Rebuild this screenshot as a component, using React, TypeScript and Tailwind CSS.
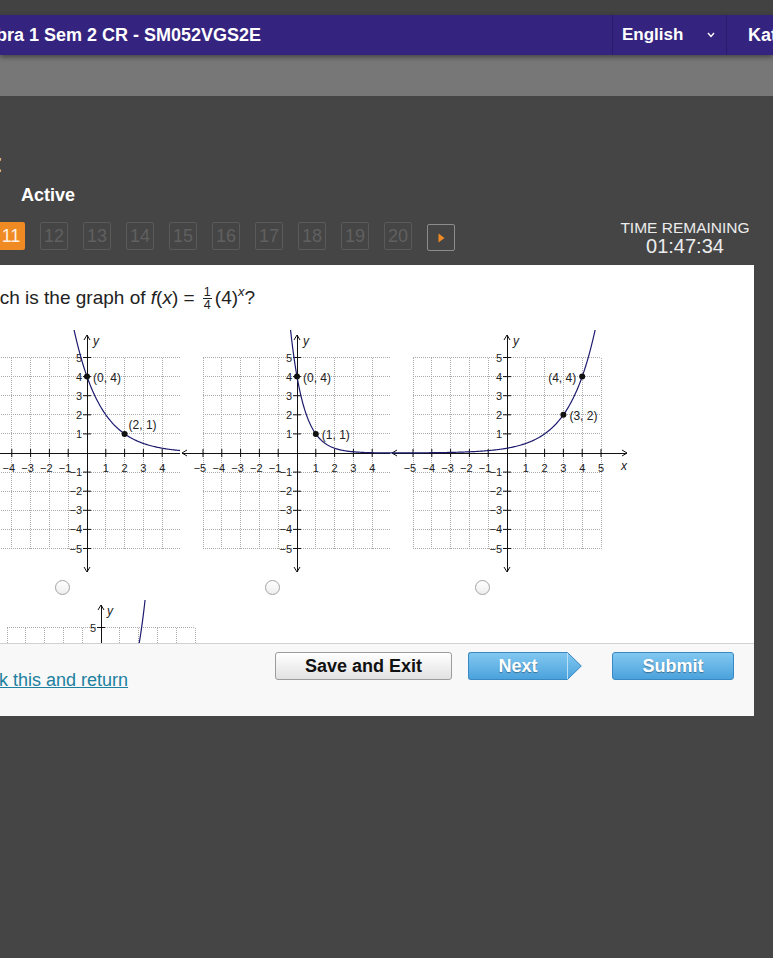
import React from 'react';

interface Pt {
  x: number;
  y: number;
  label: string;
  dx: number;
  dy: number;
  anchor?: 'start' | 'end';
}

// graph geometry (matches the 240x245 answer images)
const UX = 18.8;
const UY = 19.1;
const OX = 117;
const OY = 123;
const X = (v: number) => OX + v * UX;
const Y = (v: number) => OY - v * UY;
const TICKS = [-5, -4, -3, -2, -1, 1, 2, 3, 4, 5];
const GRID = [-5, -4, -3, -2, -1, 1, 2, 3, 4, 5];

const Graph: React.FC<{ f: (x: number) => number; pts: Pt[]; cut?: boolean }> = ({ f, pts, cut }) => {
  let d = '';
  for (let i = 0; i <= 270; i++) {
    const xv = -6.4 + i * 0.05;
    const sy = Y(f(xv));
    if (sy < -40) continue;
    d += (d ? 'L' : 'M') + X(xv).toFixed(2) + ' ' + sy.toFixed(2);
  }
  const xLabels = cut ? TICKS.filter((t) => t !== 5) : TICKS;

  return (
    <svg width="240" height="245" className="block" style={{ fontFamily: '"Liberation Sans", Arial, sans-serif' }}>
      <rect x="0" y="0" width="240" height="245" fill="#ffffff" />
      {GRID.map((g) => (
        <line
          key={'v' + g}
          x1={X(g)}
          x2={X(g)}
          y1={Y(5)}
          y2={Y(-5)}
          stroke="#ababab"
          strokeDasharray="1 1"
          shapeRendering="crispEdges"
        />
      ))}
      {GRID.map((g) => (
        <line
          key={'h' + g}
          x1={X(-5)}
          x2={X(5)}
          y1={Y(g)}
          y2={Y(g)}
          stroke="#ababab"
          strokeDasharray="1 1"
          shapeRendering="crispEdges"
        />
      ))}

      {/* axes */}
      <line x1="2" x2="237" y1={OY} y2={OY} stroke="#111" shapeRendering="crispEdges" />
      <line x1={OX} x2={OX} y1="5" y2="242" stroke="#111" shapeRendering="crispEdges" />
      <polyline points={`7,${OY - 3} 2,${OY} 7,${OY + 3}`} fill="none" stroke="#111" />
      <polyline points={`232,${OY - 3} 237,${OY} 232,${OY + 3}`} fill="none" stroke="#111" />
      <polyline points={`${OX - 3},10 ${OX},5 ${OX + 3},10`} fill="none" stroke="#111" />
      <polyline points={`${OX - 3},237 ${OX},242 ${OX + 3},237`} fill="none" stroke="#111" />

      {TICKS.map((t) => (
        <line key={'tx' + t} x1={X(t)} x2={X(t)} y1={OY - 4} y2={OY + 4} stroke="#111" />
      ))}
      {TICKS.map((t) => (
        <line key={'ty' + t} x1={OX - 4} x2={OX + 4} y1={Y(t)} y2={Y(t)} stroke="#111" />
      ))}

      {xLabels.map((t) => (
        <text
          key={'lx' + t}
          x={t < 0 ? X(t) + 3.2 : X(t)}
          y={142}
          fontSize="11"
          fill="#222"
          textAnchor={t < 0 ? 'end' : 'middle'}
        >
          {t < 0 ? '\u2212' + Math.abs(t) : t}
        </text>
      ))}
      {TICKS.map((t) => (
        <text key={'ly' + t} x={OX - 5} y={Y(t) + 4} fontSize="11" fill="#222" textAnchor="end">
          {t < 0 ? '\u2212' + Math.abs(t) : t}
        </text>
      ))}
      <text x={OX + 6} y="15" fontSize="12" fontStyle="italic" fill="#222">
        y
      </text>
      {!cut && (
        <text x={OX + 117} y="140" fontSize="12" fontStyle="italic" fill="#222" textAnchor="middle">
          x
        </text>
      )}

      <path d={d} fill="none" stroke="#1d1b6e" strokeWidth="1.2" />
      {pts.map((p) => (
        <g key={p.label}>
          <circle cx={X(p.x)} cy={Y(p.y)} r="3" fill="#111" />
          <text
            x={X(p.x) + p.dx}
            y={Y(p.y) + p.dy}
            fontSize="12"
            fill="#222"
            textAnchor={p.anchor === 'end' ? 'end' : 'start'}
          >
            {p.label}
          </text>
        </g>
      ))}
    </svg>
  );
};

const Radio: React.FC = () => (
  <div className="mt-[5px] ml-[85px] w-[15px] h-[15px] rounded-full border-[1.5px] border-[#a3a3a3] bg-linear-to-b from-white to-[#eeeeee]" />
);

const choices = [
  {
    f: (x: number) => 4 * Math.pow(0.5, x),
    pts: [
      { x: 0, y: 4, label: '(0, 4)', dx: 6, dy: 5 },
      { x: 2, y: 1, label: '(2, 1)', dx: 4, dy: -5 },
    ],
    cut: true,
  },
  {
    f: (x: number) => 4 * Math.pow(0.25, x),
    pts: [
      { x: 0, y: 4, label: '(0, 4)', dx: 6, dy: 5 },
      { x: 1, y: 1, label: '(1, 1)', dx: 6, dy: 5 },
    ],
    cut: true,
  },
  {
    f: (x: number) => Math.pow(2, x - 2),
    pts: [
      { x: 4, y: 4, label: '(4, 4)', dx: -6, dy: 5, anchor: 'end' as const },
      { x: 3, y: 2, label: '(3, 2)', dx: 6, dy: 5 },
    ],
    cut: false,
  },
];

const NavBtn: React.FC<{ n: number; active?: boolean }> = ({ n, active }) => (
  <div
    className={
      active
        ? 'w-[28px] h-[28px] rounded-[2px] bg-[#f08a22] text-[#fff1e2] text-[18px] flex items-center justify-center'
        : 'w-[28px] h-[28px] rounded-[2px] border border-[#5a5a5a] text-[#606060] text-[18px] flex items-center justify-center'
    }
  >
    {n}
  </div>
);

const App: React.FC = () => {
  return (
    <div className="w-[773px] h-[958px] overflow-hidden bg-[#454545] font-['Liberation_Sans',Arial,sans-serif]">
      <div className="h-[15px] bg-[#424242]" />

      {/* Top bar */}
      <header className="relative z-10 h-[40px] bg-[#35247f] shadow-[0_2px_5px_rgba(0,0,0,0.45)] flex text-white whitespace-nowrap">
        <div className="w-[612px] shrink-0 flex items-center">
          <span className="-ml-[43px] text-[18px] font-bold">Algebra 1 Sem 2 CR - SM052VGS2E</span>
        </div>
        <div className="w-[114px] shrink-0 border-l border-[#2a1c69] flex items-center pl-[9px]">
          <span className="text-[17px] font-bold">English</span>
          <svg width="8" height="6" viewBox="0 0 8 6" className="ml-[24px]">
            <polyline points="1,1 4,4.5 7,1" fill="none" stroke="#fff" strokeWidth="1.4" />
          </svg>
        </div>
        <div className="shrink-0 border-l border-[#2a1c69] flex items-center pl-[21px]">
          <span className="text-[18px] font-bold">Kathryn Smith</span>
        </div>
      </header>
      <div className="h-[41px] bg-[#777777]" />

      <main className="-ml-[60px] w-[814px]">
        {/* Status */}
        <div className="pt-[52px] h-[82px] flex">
          <div className="w-[63px] flex justify-end whitespace-nowrap text-[26px] leading-[30px] text-[#e5e5e5]">
            Unit Test:
          </div>
        </div>
        <div className="mt-[6px] pl-[81px] text-[18px] leading-[22px] font-bold text-white">Active</div>

        {/* Question navigation + timer */}
        <div className="mt-[14px] flex items-start justify-between">
          <div className="mt-[2px] pl-[57px] flex gap-[15px]">
            <NavBtn n={11} active />
            {[12, 13, 14, 15, 16, 17, 18, 19, 20].map((n) => (
              <NavBtn key={n} n={n} />
            ))}
            <div className="mt-[2px] w-[28px] h-[27px] rounded-[2px] border border-[#8c8c8c] flex items-center justify-center">
              <svg width="7" height="10" viewBox="0 0 7 10">
                <polygon points="0.5,0.5 6.5,5 0.5,9.5" fill="#f08a22" />
              </svg>
            </div>
          </div>
          <div className="mr-[2px] w-[134px] text-center text-[#ececec]">
            <div className="text-[15.5px] leading-none">TIME REMAINING</div>
            <div className="mt-[0.5px] text-[20px] leading-none">01:47:34</div>
          </div>
        </div>

        {/* Question panel */}
        <div className="mt-[9px] bg-white">
          <div className="h-[378px] overflow-hidden pt-[21px] pl-[27px]">
            <p className="h-[24px] text-[19px] leading-[24px] text-[#222] whitespace-nowrap">
              Which is the graph of <i>f</i>(<i>x</i>) ={' '}
              <span className="inline-flex flex-col items-center align-middle mx-[3px] text-[12.5px] leading-[12px]">
                <span className="px-[1px] border-b border-[#222]">1</span>
                <span>4</span>
              </span>
              (4)<span className="relative -top-[8px] text-[13px] italic">x</span>?
            </p>

            <div className="ml-[3px] mt-[20px]">
              <div className="flex">
                {choices.map((c, i) => (
                  <div key={i} className="relative w-[210px] shrink-0">
                    <Graph f={c.f} pts={c.pts} cut={c.cut} />
                    <Radio />
                  </div>
                ))}
              </div>
              <div className="mt-[5px] ml-[14px] flex">
                <div className="relative w-[210px] shrink-0">
                  <Graph
                    f={(x) => Math.pow(4, x - 1)}
                    pts={[
                      { x: 1, y: 1, label: '(1, 1)', dx: 6, dy: 5 },
                      { x: 2, y: 4, label: '(2, 4)', dx: 6, dy: 5 },
                    ]}
                  />
                  <Radio />
                </div>
              </div>
            </div>
          </div>

          {/* Footer */}
          <div className="h-[73px] border-t border-[#d2d2d2] bg-[#f8f8f8] pt-[8px] flex items-start">
            <div className="w-[335px] shrink-0 pl-[28px] mt-[17px] whitespace-nowrap">
              <a href="#" className="text-[18px] leading-[22px] text-[#20809f] underline">
                Mark this and return
              </a>
            </div>
            <button className="w-[177px] h-[28px] shrink-0 rounded-[3px] border border-[#9c9c9c] bg-linear-to-b from-white to-[#e2e2e2] text-[18px] font-bold text-[#111]">
              Save and Exit
            </button>
            <div className="ml-[16px] flex shrink-0">
              <button className="w-[99px] h-[28px] rounded-l-[3px] border border-r-0 border-[#3a88c2] bg-linear-to-b from-[#82c8f1] to-[#4aa2dc] text-[18px] font-bold text-white [text-shadow:0_1px_1px_rgba(0,0,0,0.35)]">
                Next
              </button>
              <svg width="15" height="28" viewBox="0 0 15 28" className="block">
                <defs>
                  <linearGradient id="nextg" x1="0" y1="0" x2="0" y2="1">
                    <stop offset="0" stopColor="#82c8f1" />
                    <stop offset="1" stopColor="#4aa2dc" />
                  </linearGradient>
                </defs>
                <polygon points="0,0.5 0.5,0.5 14.3,14 0.5,27.5 0,27.5" fill="url(#nextg)" stroke="#3a88c2" />
                <line x1="0.5" x2="0.5" y1="1" y2="27" stroke="#b9e0f7" />
              </svg>
            </div>
            <button className="ml-[30px] w-[122px] h-[28px] shrink-0 rounded-[3px] border border-[#3a88c2] bg-linear-to-b from-[#82c8f1] to-[#4aa2dc] text-[18px] font-bold text-white [text-shadow:0_1px_1px_rgba(0,0,0,0.35)]">
              Submit
            </button>
          </div>
        </div>
      </main>
    </div>
  );
};

export default App;
